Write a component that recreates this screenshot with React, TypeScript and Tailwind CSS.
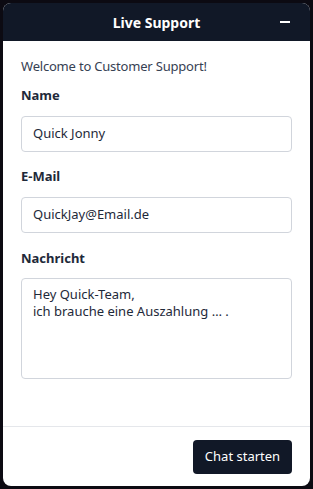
import React from "react";

export default function App() {
  const font = { fontFamily: '"Noto Sans", "Open Sans", Arial, sans-serif' };
  return (
    <div className="h-[489px] w-[313px] bg-[#0c0a12] p-[3px]" style={font}>
      <div className="flex h-full flex-col overflow-hidden rounded-lg bg-white">
        <div className="relative flex h-[38px] shrink-0 items-center justify-center bg-[#111827]">
          <span className="text-[14px] font-bold text-white">Live Support</span>
          <span className="absolute right-[20px] top-[18px] h-[2px] w-[10px] bg-white" />
        </div>
        <div className="flex flex-1 flex-col px-[18px] pt-[15px]">
          <p className="text-[13px] leading-5 tracking-[-0.2px] text-gray-700">Welcome to Customer Support!</p>
          <label className="mt-[9px] text-[13px] font-bold leading-5 text-gray-800">Name</label>
          <div className="mt-[11px] flex h-[36px] items-center rounded border border-gray-300 px-[11px] text-[13px] text-gray-800">
            Quick Jonny
          </div>
          <label className="mt-[14px] text-[13px] font-bold leading-5 text-gray-800">E-Mail</label>
          <div className="mt-[11px] flex h-[36px] items-center rounded border border-gray-300 px-[11px] text-[13px] text-gray-800">
            QuickJay@Email.de
          </div>
          <label className="mt-[15px] text-[13px] font-bold leading-5 text-gray-800">Nachricht</label>
          <div className="mt-[10px] h-[101px] rounded border border-gray-300 px-[11px] pt-[7px] text-[13px] leading-[17px] text-gray-800">
            Hey Quick-Team,
            <br />
            ich brauche eine Auszahlung … .
          </div>
        </div>
        <div className="flex h-[60px] shrink-0 items-center justify-end border-t border-gray-200 px-[18px]">
          <button className="flex h-[34px] w-[99px] items-center justify-center rounded bg-[#111827] text-[13px] text-white">
            Chat starten
          </button>
        </div>
      </div>
    </div>
  );
}
